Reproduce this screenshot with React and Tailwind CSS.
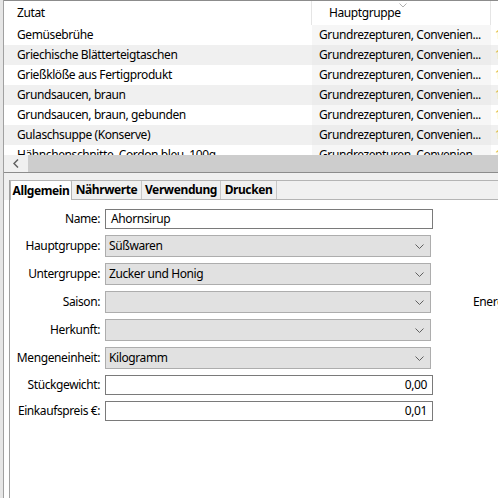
import React from "react";

const rows = [
  "Gemüsebrühe",
  "Griechische Blätterteigtaschen",
  "Grießklöße aus Fertigprodukt",
  "Grundsaucen, braun",
  "Grundsaucen, braun, gebunden",
  "Gulaschsuppe (Konserve)",
  "Hähnchenschnitte, Cordon bleu, 100g",
];

const Chevron = ({ className = "" }) => (
  <svg width="9" height="5" viewBox="0 0 9 5" className={className}>
    <path d="M0.5 0.5 L4.5 4.5 L8.5 0.5" fill="none" stroke="#606060" strokeWidth="1" />
  </svg>
);

const Label = ({ children }) => (
  <div className="w-[90px] shrink-0 text-right mr-[5px] whitespace-nowrap">{children}</div>
);

const Combo = ({ value }) => (
  <div className="w-[326px] h-[22px] shrink-0 flex items-center justify-between bg-[#e1e1e1] border border-[#adadad] pl-[3px] pr-[6px]">
    <span>{value}</span>
    <Chevron />
  </div>
);

const TextBox = ({ value, right }) => (
  <div
    className={
      "w-[328px] h-[20px] shrink-0 flex items-center bg-white border border-[#7a7a7a] " +
      (right ? "justify-end pr-[5px]" : "pl-[5px]")
    }
  >
    {value}
  </div>
);

export default function App() {
  return (
    <div className="w-[498px] h-[498px] overflow-hidden bg-[#f0f0f0] flex font-['Noto_Sans',sans-serif] text-[12px] tracking-[-0.4px] text-black leading-none">
      <div className="w-[3px] shrink-0 bg-[#e6e6e6]" />
      <div className="flex-1 min-w-0 flex flex-col border-l border-[#a0a0a0]">
        {/* Zutaten list */}
        <div className="border-t border-b border-[#8c8c8c] bg-white">
          <div className="h-[24px] flex items-center">
            <div className="w-[307px] shrink-0 pl-[13px]">Zutat</div>
            <div className="w-[179px] shrink-0 h-full flex items-center border-l border-[#e5e5e5] pl-[17px] relative">
              Hauptgruppe
              <svg width="8" height="5" viewBox="0 0 8 5" className="absolute left-[87px] top-[2px]">
                <path d="M0.5 0.5 L4 4 L7.5 0.5" fill="none" stroke="#b0b0b0" strokeWidth="1" />
              </svg>
            </div>
            <div className="flex-1 h-full border-l border-[#e5e5e5]" />
          </div>
          <div className="h-[130px] overflow-hidden">
            {rows.map((r, i) => (
              <div
                key={r}
                className={"h-[20px] flex items-center whitespace-nowrap " + (i % 2 ? "bg-[#f0f0f0]" : "bg-white")}
              >
                <div className="w-[307px] shrink-0 pl-[13px]">{r}</div>
                <div
                  className={
                    "w-[179px] shrink-0 h-full flex items-center pl-[7px] ml-[1px] " +
                    (i % 2 ? "bg-[#ececec]" : "bg-[#f6f6f6]")
                  }
                >
                  Grundrezepturen, Convenien...
                </div>
                <div className="flex-1 h-full flex items-center pl-[3px] ml-[1px] text-[#d9b23a]">
                  1,00
                </div>
              </div>
            ))}
          </div>
          <div className="h-[17px] flex bg-[#cdcdcd]">
            <div className="w-[24px] shrink-0 bg-[#f0f0f0] flex items-center justify-center">
              <svg width="6" height="9" viewBox="0 0 6 9">
                <path d="M5 0.5 L1 4.5 L5 8.5" fill="none" stroke="#606060" strokeWidth="1.5" />
              </svg>
            </div>
            <div className="flex-1" />
          </div>
        </div>

        {/* lower part */}
        <div className="h-[7px] shrink-0" />
        <div className="flex-1 flex">
          <div className="w-[5px] shrink-0 flex flex-col">
            <div className="h-[20px] bg-[#f0f0f0]" />
            <div className="flex-1 bg-white" />
          </div>
          <div className="flex-1 flex flex-col border-l border-[#a0a0a0]">
            {/* tabs */}
            <div className="h-[20px] flex border-t border-b border-[#b4b4b4] bg-[#f0f0f0] font-bold">
              <div className="w-[62px] shrink-0 -mt-px h-[21px] bg-white border border-b-0 border-[#b4b4b4] rounded-t-[2px] flex items-center justify-center">
                Allgemein
              </div>
              <div className="w-[70px] shrink-0 border-r border-[#c8c8c8] flex items-center justify-center">Nährwerte</div>
              <div className="w-[79px] shrink-0 border-r border-[#c8c8c8] flex items-center justify-center">Verwendung</div>
              <div className="w-[56px] shrink-0 border-r border-[#c8c8c8] flex items-center justify-center">Drucken</div>
            </div>
            {/* form */}
            <div className="flex-1 bg-white pt-[9px] flex flex-col gap-[6px]">
              <div className="flex items-center">
                <Label>Name:</Label>
                <TextBox value="Ahornsirup" />
              </div>
              <div className="flex items-center">
                <Label>Hauptgruppe:</Label>
                <Combo value="Süßwaren" />
              </div>
              <div className="flex items-center">
                <Label>Untergruppe:</Label>
                <Combo value="Zucker und Honig" />
              </div>
              <div className="flex items-center">
                <Label>Saison:</Label>
                <Combo value="" />
                <span className="ml-[42px] whitespace-nowrap">Energie</span>
              </div>
              <div className="flex items-center">
                <Label>Herkunft:</Label>
                <Combo value="" />
              </div>
              <div className="flex items-center">
                <Label>Mengeneinheit:</Label>
                <Combo value="Kilogramm" />
              </div>
              <div className="flex items-center">
                <Label>Stückgewicht:</Label>
                <TextBox value="0,00" right />
              </div>
              <div className="flex items-center">
                <Label>Einkaufspreis €:</Label>
                <TextBox value="0,01" right />
              </div>
            </div>
          </div>
        </div>
      </div>
    </div>
  );
}
